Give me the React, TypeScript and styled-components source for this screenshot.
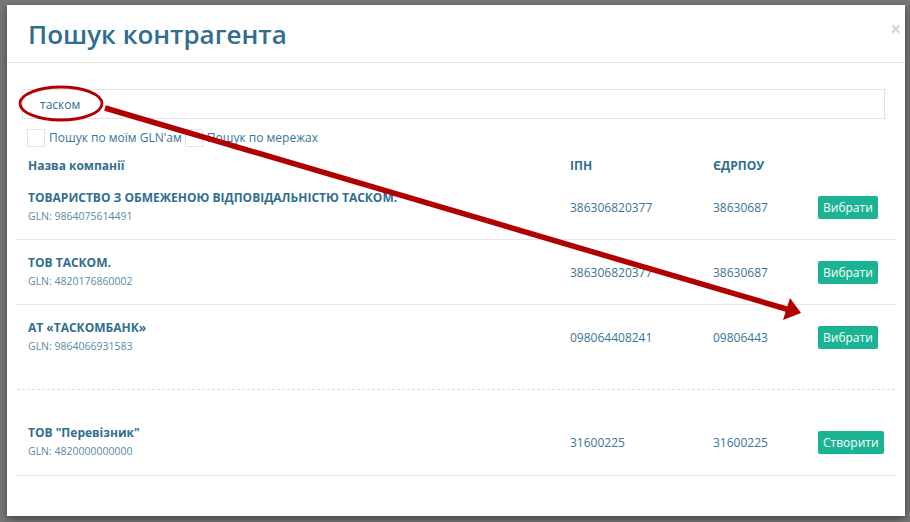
import React from "react";
import styled, { createGlobalStyle } from "styled-components";

const GlobalStyle = createGlobalStyle`
  html, body {
    margin: 0;
    padding: 0;
    background: #787878;
    font-family: "Open Sans", "Noto Sans", sans-serif;
  }
  * { box-sizing: border-box; }
`;

const Page = styled.div`
  position: relative;
  width: 910px;
  height: 522px;
  overflow: hidden;
  background: #787878;
  padding: 5px 0 0 7px;
`;

const Modal = styled.div`
  width: 898px;
  height: 511px;
  background: #ffffff;
  box-shadow: 0 3px 9px rgba(0, 0, 0, 0.45);
  display: flex;
  flex-direction: column;
`;

const Header = styled.div`
  display: flex;
  justify-content: space-between;
  align-items: flex-start;
  padding: 15px 4px 13px 21px;
  border-bottom: 1px solid #e5e5e5;
`;

const Title = styled.h2`
  margin: 0;
  font-size: 26px;
  line-height: 29px;
  font-weight: 600;
  color: #2f6e8e;
`;

const Close = styled.span`
  font-size: 19px;
  line-height: 1;
  font-weight: 700;
  color: #c9d8df;
`;

const Body = styled.div`
  padding: 26px 10px 0;
  display: flex;
  flex-direction: column;
`;

const SearchInput = styled.div`
  height: 30px;
  margin: 0 10px 0 5px;
  border: 1px solid #e2e2e2;
  display: flex;
  align-items: center;
  padding-left: 17px;
  font-size: 12px;
  color: #2f6e8e;
`;

const Options = styled.div`
  display: flex;
  align-items: center;
  margin: 10px 0 0 10px;
`;

const Check = styled.span`
  width: 18px;
  height: 18px;
  border: 1px solid #e3e3e3;
  background: #fff;
  margin-right: 4px;
  flex: none;
`;

const CheckLabel = styled.span`
  font-size: 12px;
  line-height: 18px;
  color: #3a7497;
  margin-right: 3px;
`;

const Grid = styled.div`
  display: grid;
  grid-template-columns: 542px 143px 105px 1fr;
  align-items: center;
  padding-left: 11px;
`;

const HeadRow = styled(Grid)`
  padding-top: 10px;
  font-size: 12px;
  line-height: 18px;
  font-weight: 700;
  color: #2f6e8e;
`;

const Row = styled(Grid)<{ $top?: number; $bottom?: number; $dashed?: boolean }>`
  padding-top: ${(p) => p.$top ?? 14}px;
  padding-bottom: ${(p) => p.$bottom ?? 14}px;
  border-bottom: 1px ${(p) => (p.$dashed ? "dashed #dedede" : "solid #e6e6e6")};
`;

const Name = styled.div`
  font-size: 12px;
  line-height: 18px;
  font-weight: 700;
  color: #2f6e8e;
`;

const Gln = styled.div`
  font-size: 10.5px;
  line-height: 18px;
  color: #5b8aa6;
`;

const Num = styled.div`
  font-size: 12px;
  color: #3a7497;
`;

const Button = styled.button`
  justify-self: start;
  border: none;
  border-radius: 2px;
  background: #1ab394;
  color: #ffffff;
  font-family: "Open Sans", "Noto Sans", sans-serif;
  font-size: 12px;
  line-height: 17px;
  padding: 3px 5px;
  cursor: pointer;
`;

const Annotation = styled.svg`
  position: absolute;
  left: 0;
  top: 0;
  pointer-events: none;
`;

type Company = {
  name: string;
  gln: string;
  ipn: string;
  edrpou: string;
  action: string;
  top?: number;
  bottom?: number;
  dashed?: boolean;
};

const companies: Company[] = [
  {
    name: "ТОВАРИСТВО З ОБМЕЖЕНОЮ ВІДПОВІДАЛЬНІСТЮ ТАСКОМ.",
    gln: "9864075614491",
    ipn: "386306820377",
    edrpou: "38630687",
    action: "Вибрати",
  },
  {
    name: "ТОВ ТАСКОМ.",
    gln: "4820176860002",
    ipn: "386306820377",
    edrpou: "38630687",
    action: "Вибрати",
  },
  {
    name: "АТ «ТАСКОМБАНК»",
    gln: "9864066931583",
    ipn: "098064408241",
    edrpou: "09806443",
    action: "Вибрати",
    bottom: 34,
    dashed: true,
  },
  {
    name: 'ТОВ "Перевізник"',
    gln: "4820000000000",
    ipn: "31600225",
    edrpou: "31600225",
    action: "Створити",
    top: 34,
    bottom: 15,
  },
];

export default function App() {
  return (
    <>
      <GlobalStyle />
      <Page>
        <Modal>
          <Header>
            <Title>Пошук контрагента</Title>
            <Close>×</Close>
          </Header>
          <Body>
            <SearchInput>таском</SearchInput>
            <Options>
              <Check />
              <CheckLabel>Пошук по моїм GLN'ам</CheckLabel>
              <Check />
              <CheckLabel>Пошук по мережах</CheckLabel>
            </Options>
            <HeadRow>
              <div>Назва компанії</div>
              <div>ІПН</div>
              <div>ЄДРПОУ</div>
              <div />
            </HeadRow>
            {companies.map((c) => (
              <Row key={c.gln} $top={c.top} $bottom={c.bottom} $dashed={c.dashed}>
                <div>
                  <Name>{c.name}</Name>
                  <Gln>GLN: {c.gln}</Gln>
                </div>
                <Num>{c.ipn}</Num>
                <Num>{c.edrpou}</Num>
                <Button>{c.action}</Button>
              </Row>
            ))}
          </Body>
        </Modal>
        <Annotation width={910} height={522} viewBox="0 0 910 522">
          <ellipse cx="61" cy="103.5" rx="41" ry="16.5" fill="none" stroke="#b00000" strokeWidth="2.8" />
          <line x1="105" y1="108" x2="788" y2="309.5" stroke="#b00000" strokeWidth="5.5" />
          <polygon points="801,313 783,320 790,298" fill="#b00000" />
        </Annotation>
      </Page>
    </>
  );
}
